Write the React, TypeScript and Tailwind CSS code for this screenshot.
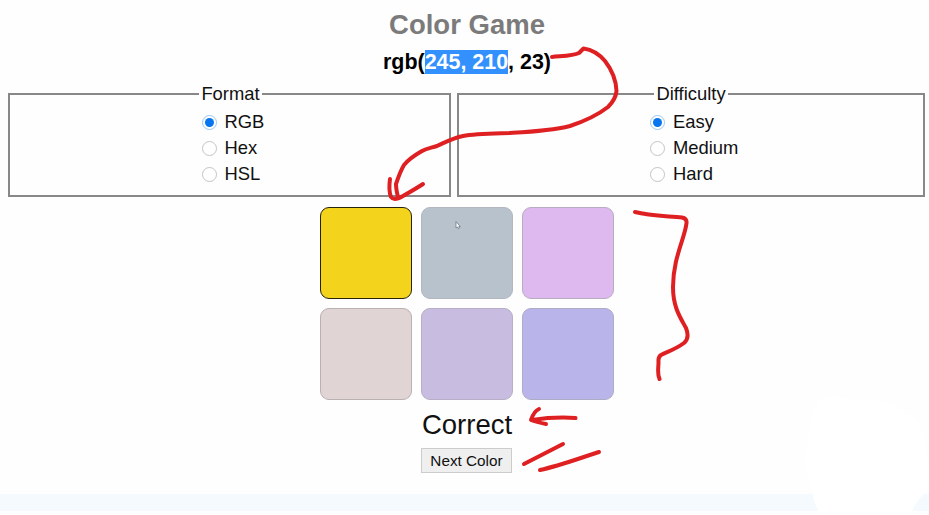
import React from "react";

function Radio({ label, checked }: { label: string; checked?: boolean }) {
  return (
    <label className="flex h-[26px] items-center gap-2">
      <span
        className={`flex size-[15px] items-center justify-center rounded-full border bg-white ${
          checked ? "border-[#9cc8ef]" : "border-[#c4c4c8]"
        }`}
      >
        {checked && <span className="size-[9px] rounded-full bg-[#0675ef]" />}
      </span>
      <span className="text-[18.4px] leading-[26px]">{label}</span>
    </label>
  );
}

function Group({ title, options, className, listClass }: { title: string; options: string[]; className: string; listClass: string }) {
  return (
    <section className={`h-[104px] border-2 border-[#888] ${className}`}>
      <h2 className="mx-auto -mt-[12px] w-fit bg-[#fefefe] px-[2.5px] text-[18.4px] leading-[22px]">{title}</h2>
      <div className={`mt-[4px] ${listClass}`}>
        {options.map((o, i) => (
          <Radio key={o} label={o} checked={i === 0} />
        ))}
      </div>
    </section>
  );
}

const swatches = [
  "bg-[#f3d31c] border-[#28230c]",
  "bg-[#b8c2cd] border-[#b2b7c0]",
  "bg-[#deb9ef] border-[#b9adc3]",
  "bg-[#e1d4d5] border-[#b9b1b2]",
  "bg-[#c8bce0] border-[#b6afc5]",
  "bg-[#b9b5ea] border-[#aeacc6]",
];

export default function App() {
  return (
    <main
      className="relative flex h-[515px] w-[929px] flex-col overflow-hidden bg-[#fefefe] text-[#111]"
      style={{ fontFamily: '"Liberation Sans", Arial, sans-serif' }}
    >
      <h1 className="mt-[9px] h-8 text-center text-[27.5px] leading-8 font-bold text-[#7b7b7b] pl-[5px]">Color Game</h1>
      <p className="mt-[9px] flex h-6 justify-center pl-[5px] text-[21.45px] leading-6 font-bold whitespace-pre text-black">
        rgb(<span className="bg-[#3390ff] text-white">245, 210</span>, 23)
      </p>
      <div className="mt-[19px] flex gap-[6px] pl-2">
        <Group title="Format" options={["RGB", "Hex", "HSL"]} className="w-[443px] [&>h2]:translate-x-px" listClass="pl-[191.5px]" />
        <Group title="Difficulty" options={["Easy", "Medium", "Hard"]} className="w-[468px]" listClass="pl-[191px]" />
      </div>
      <div className="mt-[10px] ml-[320px] grid w-[294px] grid-cols-3 gap-[9px]">
        {swatches.map((s) => (
          <div key={s} className={`h-[92px] w-[92px] rounded-[9px] border ${s}`} />
        ))}
      </div>
      <p className="mt-[9px] h-8 pl-[5px] text-center text-[27.5px] leading-8">Correct</p>
      <button className="mt-[7px] ml-[421px] h-[25px] w-[91px] border border-[#ccc] bg-[#efefef] text-[15.3px] leading-[22px] whitespace-nowrap">
        Next Color
      </button>
      <div className="mt-[21px] h-[17px] bg-[#f4fafd]" />

      <svg className="pointer-events-none absolute inset-0" width="929" height="515" viewBox="0 0 929 515" fill="none">
        <path d="M822 398 Q838 395 853 401 Q882 396 898 409 Q920 418 925 443 Q933 478 925 493 Q914 503 911 515 H822 Q812 503 813 492 C804 472 806 455 808 442 Q809 410 822 398Z" fill="#fff" />
        <path d="M456 221.5v6.5l1.5-1 1 1.8 1-.6-.8-1.6h1.6z" fill="#fff" stroke="#6c7985" strokeWidth=".8" />
        <g stroke="#df2023" strokeWidth="4" strokeLinecap="round" strokeLinejoin="round">
          <path d="M552 57C561 56 573 56 579 53L583.5 48.5C594 50 600 55 605 61C612 70 616 79 616.5 91C616 97 613 102 608 107C599 114 585 121 570 126C550 131 528 132 510 133C493 133.5 475 133.5 463 136C453 138 446 142 437 146C431 148 427 148 422 151C415 155 408 160 404 165C401 170 397 181 396 184C396 189 397 193 398 197" />
          <path d="M390 179C389 186 389 192 391 197C393 200 398 199 403 196C410 192 417 188 423 184" />
          <path d="M635 212C650 216 668 216 682 217.5Q687 218.5 686.5 223C685 238 673 258 673 287C673 307 680 317 686 328Q690 338 684 343C676 349 667 352 661 355Q658 357 658.5 362C658.5 368 657 374 659.5 379" />
          <path d="M575.5 418C562 417 545 418 532 420M539 409C534 411 532 417 531 420C536 422 541 423 546 424" />
          <path d="M524 464L563 444M540 470C559 466 580 458 599 452" />
        </g>
      </svg>
    </main>
  );
}
